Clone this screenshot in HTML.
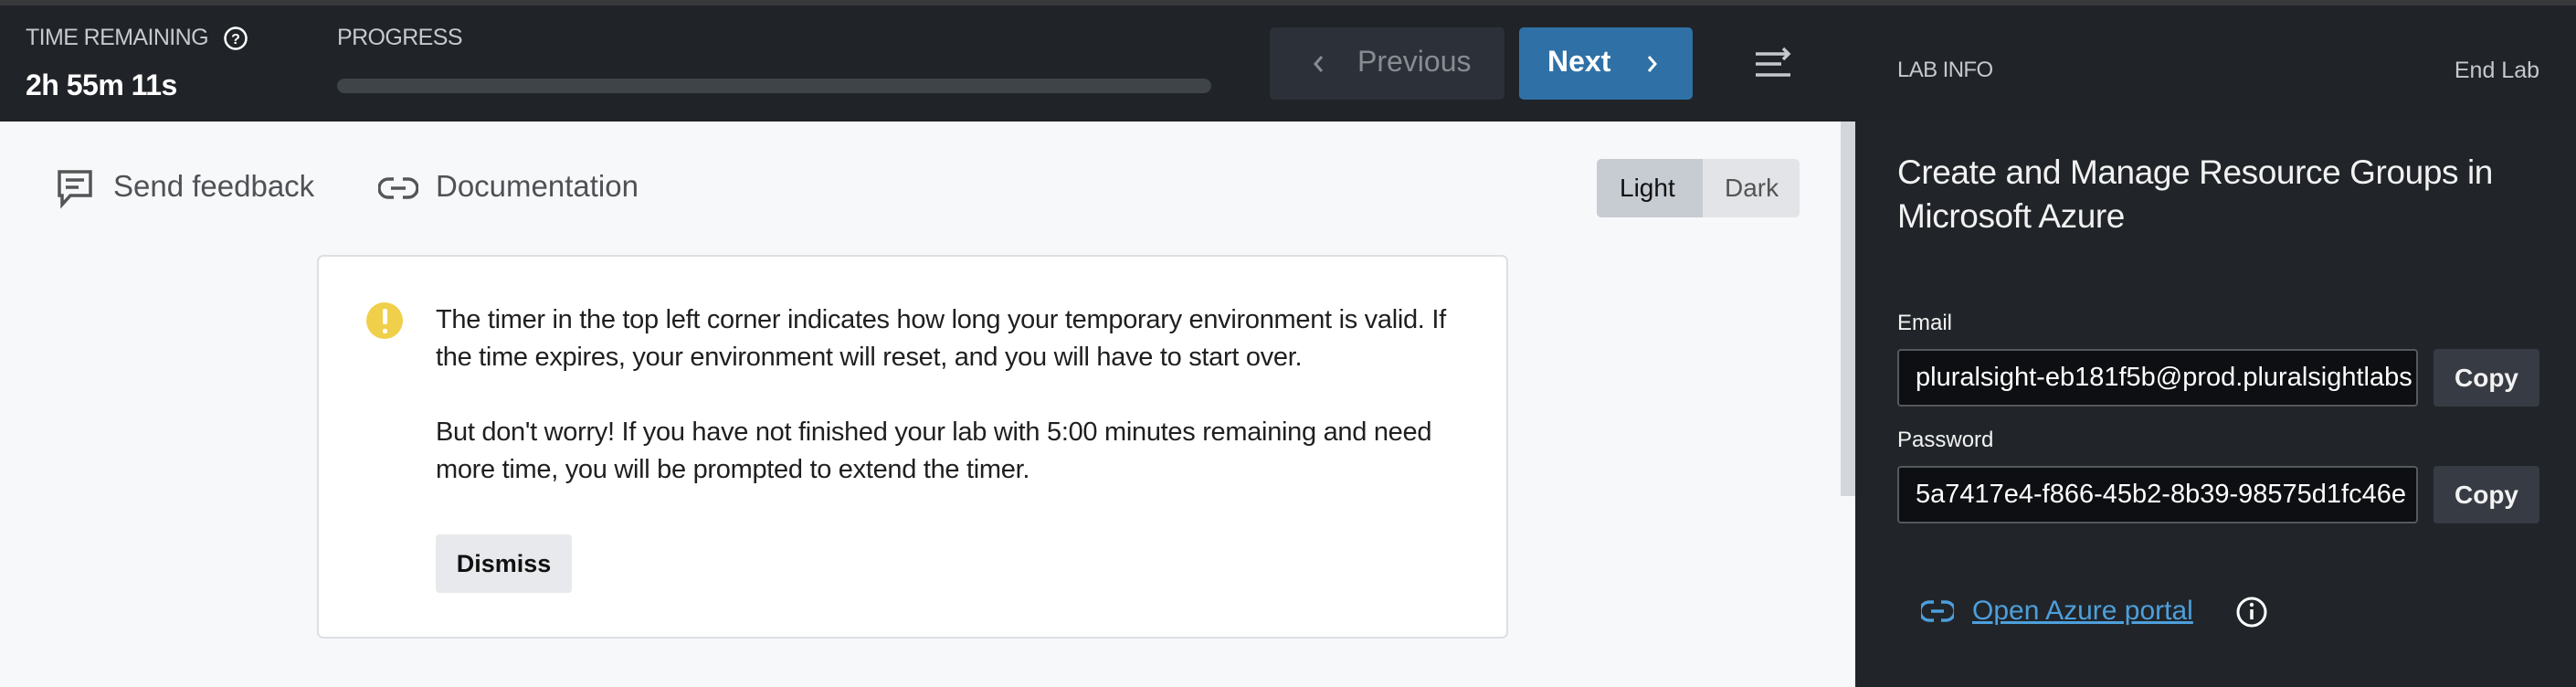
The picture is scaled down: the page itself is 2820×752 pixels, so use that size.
<!DOCTYPE html>
<html><head><meta charset="utf-8"><style>
*{box-sizing:border-box;margin:0;padding:0}
body{width:2820px;height:752px;overflow:hidden;background:#f7f8fa;font-family:"Liberation Sans",sans-serif;position:relative}
.a{position:absolute;white-space:nowrap}
</style></head><body>
<div class="a" style="left:0;top:0;width:2820px;height:133px;background:#202428"></div>
<div class="a" style="left:0;top:0;width:2820px;height:6px;background:#38393b"></div>
<div class="a" style="left:2031px;top:133px;width:789px;height:619px;background:#212529"></div>
<div class="a" style="left:2015px;top:133px;width:16px;height:410px;background:#d3d6da"></div>
<div class="a" style="left:2015px;top:543px;width:16px;height:209px;background:#f7f8fa"></div>

<div class="a" style="left:28px;top:27px;font-size:25px;color:#c5c8cc;letter-spacing:-0.6px">TIME REMAINING</div>
<svg class="a" style="left:244px;top:28px" width="28" height="28" viewBox="0 0 28 28"><circle cx="14" cy="14" r="11.5" fill="none" stroke="#fff" stroke-width="2.5"/><text x="14" y="20" font-size="16" font-weight="bold" fill="#fff" text-anchor="middle" font-family="Liberation Sans">?</text></svg>
<div class="a" style="left:28px;top:75px;font-size:32px;font-weight:bold;color:#fff;letter-spacing:-0.5px">2h 55m 11s</div>
<div class="a" style="left:369px;top:27px;font-size:25px;color:#c5c8cc;letter-spacing:-0.6px">PROGRESS</div>
<div class="a" style="left:369px;top:86px;width:957px;height:16px;border-radius:8px;background:#3f4448"></div>

<div class="a" style="left:1390px;top:30px;width:257px;height:79px;border-radius:5px;background:#2c3038"></div>
<svg class="a" style="left:1436px;top:58px" width="16" height="24" viewBox="0 0 16 24"><path d="M11 4L4 12l7 8" fill="none" stroke="#888c92" stroke-width="3"/></svg>
<div class="a" style="left:1486px;top:49px;font-size:32px;color:#888c92">Previous</div>
<div class="a" style="left:1663px;top:30px;width:190px;height:79px;border-radius:5px;background:#2f71a6"></div>
<div class="a" style="left:1694px;top:49px;font-size:32px;font-weight:bold;color:#fff">Next</div>
<svg class="a" style="left:1800px;top:58px" width="16" height="24" viewBox="0 0 16 24"><path d="M5 4l7 8-7 8" fill="none" stroke="#fff" stroke-width="3"/></svg>
<svg class="a" style="left:1920px;top:48px" width="44" height="40" viewBox="0 0 44 40"><path d="M2 11h36M32 5l6 6-6 6M2 22h28M2 34h38" fill="none" stroke="#c5c8cc" stroke-width="3.5"/></svg>

<div class="a" style="left:2077px;top:63px;font-size:24px;color:#c5c8cc;letter-spacing:-0.6px">LAB INFO</div>
<div class="a" style="left:2680px;top:63px;width:100px;text-align:right;font-size:25px;color:#c5c8cc">End Lab</div>

<svg class="a" style="left:60px;top:184px" width="44" height="46" viewBox="0 0 44 46"><path d="M5 4h34v26H17l-9 10v-10H5z" fill="none" stroke="#555" stroke-width="3.5"/><path d="M12 13h20M12 21h14" stroke="#555" stroke-width="3.5"/></svg>
<div class="a" style="left:124px;top:185px;font-size:33px;color:#4f5155">Send feedback</div>
<svg class="a" style="left:414px;top:192px" width="44" height="28" viewBox="0 0 44 28"><path d="M17 4h-6a10 10 0 0 0 0 20h6M27 4h6a10 10 0 0 1 0 20h-6M14 14h16" fill="none" stroke="#555" stroke-width="3.5"/></svg>
<div class="a" style="left:477px;top:185px;font-size:33px;color:#4f5155">Documentation</div>

<div class="a" style="left:1748px;top:174px;width:222px;height:64px;border-radius:5px;background:#e2e4e7;overflow:hidden"><div style="width:116px;height:64px;background:#c7ccd3"></div></div>
<div class="a" style="left:1773px;top:190px;font-size:28px;color:#111">Light</div>
<div class="a" style="left:1888px;top:190px;font-size:28px;color:#555">Dark</div>

<div class="a" style="left:347px;top:279px;width:1304px;height:420px;background:#fff;border:2px solid #dcdfe3;border-radius:7px"></div>
<div class="a" style="left:401px;top:331px;width:40px;height:40px;border-radius:50%;background:#f0d04a"></div>
<div class="a" style="left:419px;top:338px;width:5px;height:17px;background:#fff;border-radius:2px"></div>
<div class="a" style="left:419px;top:360px;width:5px;height:5px;background:#fff;border-radius:2px"></div>
<div class="a" style="left:477px;top:330px;font-size:29px;line-height:41px;color:#1f1f1f;letter-spacing:-0.3px">The timer in the top left corner indicates how long your temporary environment is valid. If<br>the time expires, your environment will reset, and you will have to start over.<br><br>But don't worry! If you have not finished your lab with 5:00 minutes remaining and need<br>more time, you will be prompted to extend the timer.</div>
<div class="a" style="left:477px;top:585px;width:149px;height:64px;border-radius:4px;background:#e8e9ec;font-size:27px;font-weight:bold;color:#111;text-align:center;line-height:64px">Dismiss</div>

<div class="a" style="left:2077px;top:165px;font-size:37px;line-height:48px;color:#f2f2f2;letter-spacing:-0.4px">Create and Manage Resource Groups in<br>Microsoft Azure</div>
<div class="a" style="left:2077px;top:340px;font-size:24px;color:#f2f2f2">Email</div>
<div class="a" style="left:2077px;top:382px;width:570px;height:63px;border:2px solid #55595e;border-radius:4px;background:#0d0f12;overflow:hidden;font-size:29px;color:#fff;line-height:59px;padding-left:18px">pluralsight-eb181f5b@prod.pluralsightlabs</div>
<div class="a" style="left:2664px;top:382px;width:116px;height:63px;border-radius:4px;background:#373b43;font-size:28px;font-weight:bold;color:#f2f2f2;text-align:center;line-height:63px">Copy</div>
<div class="a" style="left:2077px;top:468px;font-size:24px;color:#f2f2f2">Password</div>
<div class="a" style="left:2077px;top:510px;width:570px;height:63px;border:2px solid #55595e;border-radius:4px;background:#0d0f12;overflow:hidden;font-size:29px;color:#fff;line-height:59px;padding-left:18px">5a7417e4-f866-45b2-8b39-98575d1fc46e</div>
<div class="a" style="left:2664px;top:510px;width:116px;height:63px;border-radius:4px;background:#373b43;font-size:28px;font-weight:bold;color:#f2f2f2;text-align:center;line-height:63px">Copy</div>

<svg class="a" style="left:2103px;top:656px" width="36" height="26" viewBox="0 0 36 26"><path d="M14 3h-5a10 10 0 0 0 0 20h5M22 3h5a10 10 0 0 1 0 20h-5M11 13h14" fill="none" stroke="#4d9fdc" stroke-width="3.5"/></svg>
<div class="a" style="left:2159px;top:652px;font-size:30px;color:#4d9fdc;text-decoration:underline">Open Azure portal</div>
<svg class="a" style="left:2447px;top:652px" width="36" height="36" viewBox="0 0 36 36"><circle cx="18" cy="18" r="15" fill="none" stroke="#fff" stroke-width="3"/><path d="M18 15v11" stroke="#fff" stroke-width="3.5"/><circle cx="18" cy="10" r="2.2" fill="#fff"/></svg>
</body></html>
